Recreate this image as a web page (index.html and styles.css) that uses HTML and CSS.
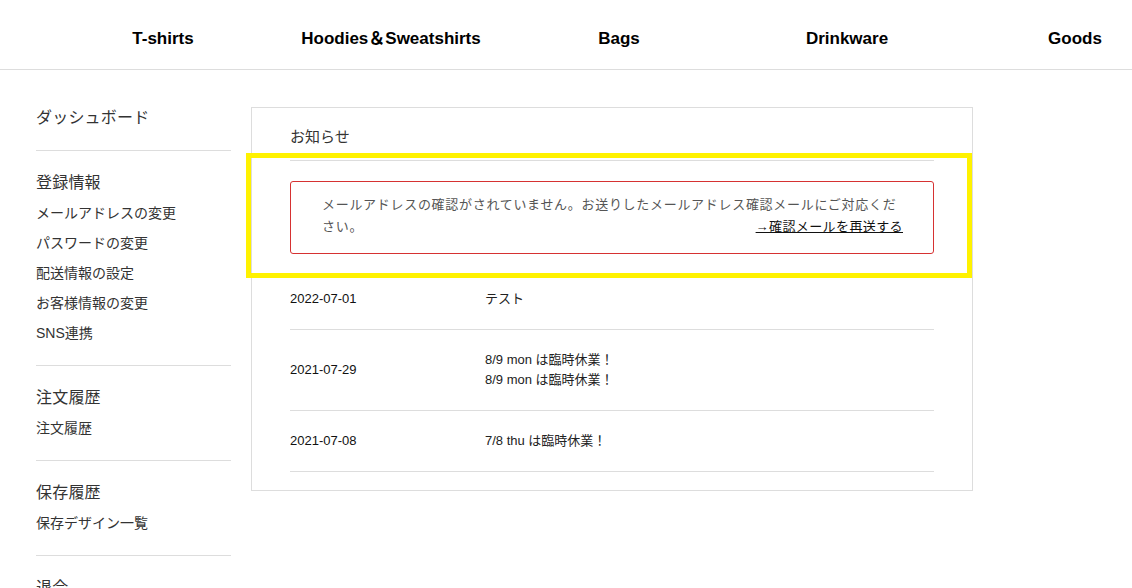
FILE: index.html
```html
<!doctype html>
<html>
    <head>
        <meta charset="utf-8"/>
        <link rel="stylesheet" href="styles.css">
    </head>
    <body>
        <header class="site-header">
            <nav class="global-nav">
                <a href="#">T-shirts</a>
                <a href="#">Hoodies＆Sweatshirts</a>
                <a href="#">Bags</a>
                <a href="#">Drinkware</a>
                <a href="#">Goods</a>
            </nav>
        </header>
        <main class="mypage">
            <aside class="side-menu">
                <section class="side-group">
                    <h2>ダッシュボード</h2>
                </section>
                <section class="side-group">
                    <h2>登録情報</h2>
                    <ul>
                        <li><a href="#">メールアドレスの変更</a></li>
                        <li><a href="#">パスワードの変更</a></li>
                        <li><a href="#">配送情報の設定</a></li>
                        <li><a href="#">お客様情報の変更</a></li>
                        <li><a href="#">SNS連携</a></li>
                    </ul>
                </section>
                <section class="side-group">
                    <h2>注文履歴</h2>
                    <ul>
                        <li><a href="#">注文履歴</a></li>
                    </ul>
                </section>
                <section class="side-group">
                    <h2>保存履歴</h2>
                    <ul>
                        <li><a href="#">保存デザイン一覧</a></li>
                    </ul>
                </section>
                <section class="side-group">
                    <h2>退会</h2>
                </section>
            </aside>
            <section class="news-card">
                <h1 class="news-title">お知らせ</h1>
                <div class="alert">
                    <p>メールアドレスの確認がされていません。お送りしたメールアドレス確認メールにご対応ください。<a class="resend" href="#">→確認メールを再送する</a></p>
                </div>
                <ul class="news-list">
                    <li>
                        <span class="news-date">2022-07-01</span>
                        <a class="news-body" href="#">テスト</a>
                    </li>
                    <li>
                        <span class="news-date">2021-07-29</span>
                        <a class="news-body" href="#">8/9 mon は臨時休業！<br>8/9 mon は臨時休業！</a>
                    </li>
                    <li>
                        <span class="news-date">2021-07-08</span>
                        <a class="news-body" href="#">7/8 thu は臨時休業！</a>
                    </li>
                </ul>
                <div class="highlight"></div>
            </section>
        </main>
    </body>
</html>
```

FILE: styles.css
```css
:root {
    --text: #333;
    --line: #ddd;
    --alert: #d63232;
    --marker: #fff200;
}
html, body {
    margin: 0;
    overflow: hidden;
}
body {
    background: #fff;
    color: var(--text);
    font-family: "Liberation Sans", Arial, "Noto Sans CJK JP", sans-serif;
}
a {
    color: inherit;
    text-decoration: none;
}
ul {
    list-style: none;
    margin: 0;
    padding: 0;
}

/* header */
.site-header {
    height: 69px;
    border-bottom: 1px solid var(--line);
    overflow: hidden;
}
.global-nav {
    display: flex;
    padding: 29px 0 0 49px;
}
.global-nav a {
    flex: 0 0 228px;
    height: 20px;
    line-height: 20px;
    text-align: center;
    font-size: 17px;
    font-weight: bold;
    color: #000;
}

/* layout */
.mypage {
    display: flex;
    align-items: flex-start;
    gap: 20px;
    padding: 16px 0 0 36px;
}

/* side menu */
.side-menu {
    width: 195px;
    flex-shrink: 0;
}
.side-group {
    padding: 17px 0;
    border-bottom: 1px solid var(--line);
}
.side-group h2 {
    margin: 0;
    font-size: 16px;
    font-weight: normal;
    line-height: 30px;
    letter-spacing: 0.2px;
}
.side-group li {
    font-size: 14px;
    line-height: 30px;
}

/* news card */
.news-card {
    position: relative;
    width: 722px;
    box-sizing: border-box;
    margin-top: 21px;
    padding: 0 38px 18px 38px;
    border: 1px solid var(--line);
}
.news-title {
    margin: 0;
    padding: 17px 0 11px;
    font-size: 15px;
    font-weight: normal;
    line-height: 24px;
    border-bottom: 1px solid var(--line);
}
.alert {
    margin: 20px 0 15px;
    padding: 12px 30px 15px 31px;
    border: 1px solid var(--alert);
    border-radius: 3px;
    font-size: 13px;
    letter-spacing: 0.7px;
    line-height: 22px;
    color: #555;
}
.alert p {
    margin: 0;
}
.resend {
    float: right;
    color: #111;
    text-decoration: underline;
    letter-spacing: 0.4px;
}
.news-list li {
    display: flex;
    align-items: center;
    padding: 20px 0;
    font-size: 13px;
    line-height: 20px;
    border-bottom: 1px solid var(--line);
}
.news-date {
    width: 195px;
    flex-shrink: 0;
    color: #111;
}
.news-body {
    color: #222;
}

/* annotation marker over the alert */
.highlight {
    position: absolute;
    left: -6px;
    top: 45px;
    width: 716px;
    height: 115px;
    border: 5px solid var(--marker);
    pointer-events: none;
}
```
